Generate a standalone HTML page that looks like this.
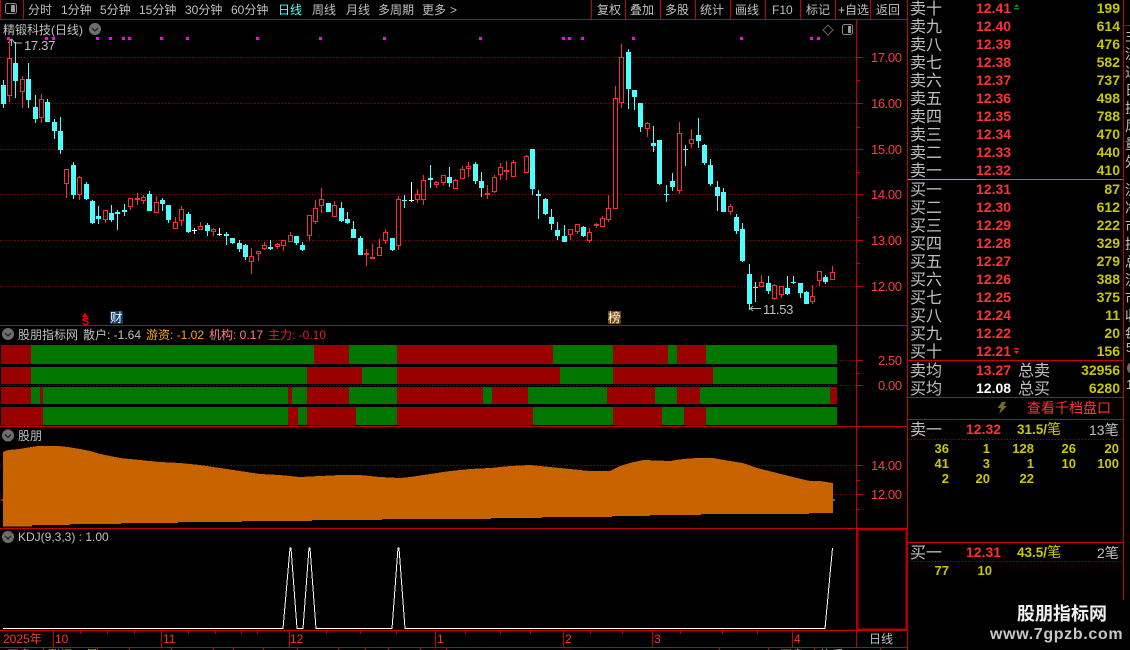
<!DOCTYPE html>
<html><head><meta charset="utf-8"><title>精锻科技</title>
<style>
html,body{margin:0;padding:0;background:#000;width:1130px;height:650px;overflow:hidden}
svg{display:block}
text{font-family:"Liberation Sans","Noto Sans CJK SC",sans-serif;font-size:12px;fill:#c0c0c0}
.l{shape-rendering:crispEdges}
.o text{font-size:16px}
.p text{font-size:14px;font-weight:bold;fill:#ff3232}
.v text{font-size:14px;font-weight:bold;fill:#c8c800;text-anchor:end}
.a text{font-size:13px;fill:#ff3c3c;letter-spacing:-.4px}
.n text{font-size:13px;font-weight:bold;fill:#c8c800;text-anchor:end}
.d text{fill:#ff3232}
</style></head><body>
<svg width="1130" height="650" viewBox="0 0 1130 650" xmlns="http://www.w3.org/2000/svg">
<!-- toolbar -->
<g>
<text x="28" y="14">分时</text><text x="61" y="14">1分钟</text><text x="100" y="14">5分钟</text><text x="139" y="14">15分钟</text><text x="185" y="14">30分钟</text><text x="231" y="14">60分钟</text>
<text x="278" y="14" style="fill:#54ffff">日线</text><text x="312" y="14">周线</text><text x="346" y="14">月线</text><text x="378" y="14">多周期</text><text x="422" y="14">更多</text><text x="450" y="14">&gt;</text>
<text x="597" y="14">复权</text><text x="630" y="14">叠加</text><text x="665" y="14">多股</text><text x="700" y="14">统计</text><text x="735" y="14">画线</text><text x="772" y="14">F10</text><text x="806" y="14">标记</text><text x="838" y="14">+自选</text><text x="876" y="14">返回</text>
</g>
<rect x="5.5" y="3.5" width="11" height="10" rx="2" fill="none" stroke="#8a8a8a"/><rect x="11" y="5" width="4" height="7" fill="#9a9a9a"/>
<!-- grid -->
<g class="l" stroke="#a00000" stroke-dasharray="1 2" fill="none">
<path d="M0 57.5H856M0 103.5H856M0 149.5H856M0 194.5H856M0 240.5H856M0 286.5H856"/>
<path d="M837 360.5H856M0 385.5H856M0 465.5H856M0 494.5H856"/>
</g>
<!-- legend -->
<text x="3" y="34">精锻科技(日线)</text>
<circle cx="95" cy="29" r="6" fill="#6e6e6e"/><path d="M92 28l3 3 3-3" stroke="#222" stroke-width="1.3" fill="none"/>
<path class="l" fill="#ff00ff" d="M7 37h3v3h-3zM45 37h3v3h-3zM52 37h3v3h-3zM96 37h3v3h-3zM109 37h3v3h-3zM122 37h3v3h-3zM128 37h3v3h-3zM160 37h3v3h-3zM186 37h3v3h-3zM256 37h3v3h-3zM319 37h3v3h-3zM383 37h3v3h-3zM479 37h3v3h-3zM562 37h3v3h-3zM568 37h3v3h-3zM581 37h3v3h-3zM632 37h3v3h-3zM740 37h3v3h-3zM810 37h3v3h-3zM817 37h3v3h-3z"/>
<path d="M828 25l5 5-5 5-5-5z" fill="none" stroke="#666"/>
<rect x="842.5" y="24.5" width="10" height="10" rx="2" fill="none" stroke="#888"/><rect x="848" y="26" width="3" height="7" fill="#999"/>
<text x="24" y="50" style="font-size:13px;letter-spacing:-.3px">17.37</text>
<path d="M11.5 39V46M8 43l3.5-4 3.500 4M14 43H22" stroke="#b0b0b0" fill="none" class="l"/>
<text x="763" y="314" style="font-size:13px;letter-spacing:-.3px">11.53</text>
<path d="M750 308.500H761M753 306l-3 2.500 3 2.500M749.500 304V310" stroke="#b0b0b0" fill="none"/>
<!-- candles: wicks -->
<path class="l" fill="none" stroke="#4dffff" d="M3.5 80V108M15.500 42V98M28.500 63V108M35.500 95V123M47.500 99V122M54.500 119V139M60.500 117V154M73.500 162V199M86.500 182V200M92.500 200V224M98.500 206V224M111.500 205V222M117.500 210V230M124.500 204V216M149.500 191V211M162.500 198V211M168.500 205V223M188.500 212V233M207.500 223V236M226.500 232V245M232.500 238V244M239.500 240V252M245.500 244V260M270.500 240V250M296.500 236V245M302.500 242V251M328.500 203V212M341.500 202V222M347.500 212V224M353.500 221V238M360.500 236V255M392.500 238V251M404.500 195V208M430.500 165V188M449.500 167V187M475.500 162V184M481.500 172V197M532.500 149V195M538.500 190V219M545.500 198V215M551.500 209V230M557.500 222V240M564.500 225V242M583.500 226V237M628.500 49V109M634.500 90V110M640.500 103V132M653.500 126V152M659.500 140V185M666.500 185V202M672.500 173V191M685.500 145V166M698.500 118V148M704.500 144V165M710.500 159V186M717.500 181V211M723.500 188V212M736.500 214V234M742.500 223V262M749.500 264V310M755.500 282V302M768.500 276V294M787.500 276V295M793.500 276V284M800.500 283V298M806.500 291V304M825.500 275V284"/>
<path class="l" fill="none" stroke="#ff2e2e" d="M9.500 38V102M22.500 76V108M41.500 94V123M66.500 169V198M79.500 176V200M105.500 210V223M130.500 198V210M137.500 193V205M143.500 195V204M156.500 196V213M175.500 217V229M181.500 206V226M200.500 222V230M213.500 228V236M251.500 248V274M258.500 251V261M264.500 242V250M277.500 243V249M283.500 240V251M290.500 232V242M309.500 215V241M315.500 200V224M321.500 188V213M334.500 201V217M366.500 249V266M372.500 244V259M379.500 239V256M385.500 229V244M398.500 196V250M417.500 189V203M423.500 175V205M436.500 181V188M443.500 175V185M455.500 179V189M462.500 166V179M468.500 162V177M487.500 185V199M494.500 175V193M500.500 163V180M506.500 161V180M513.500 160V177M526.500 155V173M570.500 229V240M577.500 224V234M589.500 228V243M596.500 223V228M602.500 216V227M608.500 195V222M615.500 86V209M621.500 44V108M647.500 122V137M679.500 122V194M691.500 129V148M730.500 204V215M761.500 275V287M774.500 284V300M781.500 286V298M812.500 285V304M819.500 271V286M832.500 266V280"/>
<path class="l" fill="none" stroke="#fff" d="M194.500 228V234M192 230.500H197M219.500 228V236M217 234.500H222M411.500 182V202M409 200.500H414"/>
<!-- candles: cyan bodies -->
<path class="l" fill="none" stroke="#4dffff" stroke-width="5" d="M3.500 85V104M15.500 63V81M28.500 79V100M35.500 107V119M47.500 102V122M54.500 122V131M60.500 131V150M73.500 165V195M86.500 184V199M92.500 201V223M98.500 216V219M111.500 213V220M117.500 212V214M124.500 210V212M149.500 194V211M162.500 200V204M168.500 205V220M188.500 214V232M207.500 225V231M226.500 234V236M232.500 238V243M239.500 243V249M245.500 245V257M270.500 247V249M296.500 236V243M302.500 245V250M328.500 203V212M341.500 208V221M347.500 219V223M353.500 229V238M360.500 238V255M392.500 238V250M404.500 200V201M430.500 178V180M449.500 177V183M475.500 164V181M481.500 181V188M532.500 149V189M538.500 194V196M545.500 199V214M551.500 217V224M557.500 230V236M564.500 236V242M583.500 227V236M628.500 52V89M634.500 90V97M640.500 103V127M653.500 143V146M659.500 140V184M666.500 194V195M672.500 181V187M685.500 149V150M698.500 135V141M704.500 145V163M710.500 165V184M717.500 187V196M723.500 192V212M736.500 217V231M742.500 229V261M749.500 274V304M755.500 287V288M768.500 283V291M787.500 288V294M793.500 282V283M800.500 283V293M806.500 292V304M825.500 277V282"/>
<!-- candles: red bodies -->
<path class="l" fill="#000" stroke="#ff2e2e" d="M7.500 58.500h4V95.500h-4zM20.500 79.500h4V91.500h-4zM39.500 99.500h4V117.500h-4zM64.500 169.500h4V183.500h-4zM77.500 177.500h4V194.500h-4zM103.500 210.500h4V219.500h-4zM128.500 198.500h4V206.500h-4zM135.500 198.500h4V199.500h-4zM141.500 197.500h4V200.500h-4zM154.500 202.500h4V212.500h-4zM173.500 222.500h4V228.500h-4zM179.500 209.500h4V220.500h-4zM198.500 226.500h4V229.500h-4zM211.500 229.500h4V231.500h-4zM249.500 256.500h4V261.500h-4zM256.500 251.500h4V253.500h-4zM262.500 245.500h4V248.500h-4zM275.500 244.500h4V246.500h-4zM281.500 240.500h4V245.500h-4zM288.500 235.500h4V241.500h-4zM307.500 215.500h4V235.500h-4zM313.500 208.500h4V221.500h-4zM319.500 199.500h4V205.500h-4zM332.500 205.500h4V216.500h-4zM364.500 253.500h4V254.500h-4zM370.500 257.500h4V258.500h-4zM377.500 247.500h4V255.500h-4zM383.500 232.500h4V240.500h-4zM396.500 199.500h4V245.500h-4zM415.500 194.500h4V199.500h-4zM421.500 180.500h4V199.500h-4zM434.500 182.500h4V184.500h-4zM441.500 175.500h4V182.500h-4zM453.500 180.500h4V188.500h-4zM460.500 169.500h4V178.500h-4zM466.500 166.500h4V168.500h-4zM485.500 193.500h4V194.500h-4zM492.500 177.500h4V191.500h-4zM498.500 167.500h4V174.500h-4zM504.500 170.500h4V171.500h-4zM511.500 162.500h4V176.500h-4zM524.500 156.500h4V172.500h-4zM568.500 229.500h4V234.500h-4zM575.500 224.500h4V231.500h-4zM587.500 232.500h4V240.500h-4zM594.500 224.500h4V225.500h-4zM600.500 218.500h4V226.500h-4zM606.500 208.500h4V219.500h-4zM613.500 98.500h4V208.500h-4zM619.500 57.500h4V102.500h-4zM645.500 123.500h4V128.500h-4zM677.500 133.500h4V190.500h-4zM689.500 139.500h4V143.500h-4zM728.500 206.500h4V211.500h-4zM759.500 282.500h4V286.500h-4zM772.500 285.500h4V298.500h-4zM779.500 286.500h4V294.500h-4zM810.500 296.500h4V301.500h-4zM817.500 271.500h4V280.500h-4zM830.500 272.500h4V279.500h-4z"/>
<!-- markers -->
<path d="M85 313l3 4h-6z" fill="#f00"/><text x="82" y="325" style="font-size:11px;font-weight:bold;fill:#f00">S</text>
<rect x="110" y="311" width="13" height="13" fill="#0b3a6e"/><text x="110" y="322" style="font-size:12.500px;fill:#fff">财</text>
<rect x="608" y="311" width="13" height="13" fill="#7a4000"/><text x="608" y="322" style="font-size:12.500px;fill:#fff">榜</text>
<!-- indicator bars -->
<g class="l">
<rect x="1" y="345" width="836" height="19" fill="#007800"/>
<path fill="#990000" d="M1 345H31V364H1zM314 345H349V364H314zM397 345H553V364H397zM613 345H668V364H613zM677 345H706V364H677z"/>
<rect x="1" y="367" width="836" height="17" fill="#007800"/>
<path fill="#990000" d="M1 367H31V384H1zM307 367H362V384H307zM397 367H560V384H397zM613 367H713V384H613z"/>
<rect x="1" y="387" width="836" height="17" fill="#007800"/>
<path fill="#990000" d="M1 387H31V404H1zM40 387H43V404H40zM288 387H292V404H288zM307 387H349V404H307zM397 387H483V404H397zM492 387H528V404H492zM607 387H655V404H607zM677 387H700V404H677zM830 387H837V404H830z"/>
<rect x="1" y="407" width="836" height="18" fill="#007800"/>
<path fill="#990000" d="M1 407H43V425H1zM288 407H298V425H288zM307 407H356V425H307zM397 407H533V425H397zM613 407H662V425H613zM684 407H706V425H684z"/>
</g>
<circle cx="8" cy="334" r="6" fill="#6e6e6e"/><path d="M5 333l3 3 3-3" stroke="#222" stroke-width="1.300" fill="none"/>
<text x="18" y="339">股朋指标网</text><text x="83" y="339">散户: -1.64</text>
<text x="146" y="339" style="fill:#ffa020">游资: -1.02</text><text x="209" y="339" style="fill:#ff8080">机构: 0.17</text><text x="268" y="339" style="fill:#e02020">主力: -0.10</text>
<!-- area -->
<path class="l" fill="#c86400" d="M3 452L8 450 19 449 25 448 38 446 58 446 68 447 80 449 90 451 100 454 110 456 120 458 130 459 140 460 160 462 180 463 200 465 220 468 240 471 260 474 280 475 300 477 320 476 340 475 360 475 380 477 400 478 410 477 430 474 450 471 470 469 490 468 510 466 530 465 550 467 570 469 590 471 610 471 620 466 630 463 643 460 670 461 683 459 697 458 713 458 730 461 743 463 757 468 777 473 797 478 810 481 820 481 833 483V513H809V514H701V515H650V516H612V517H542V518H491V519H382V520H312V521H242V522H178V523H121V524H70V525H32V526.500H3z"/>
<rect x="1" y="499" width="2" height="2" fill="#f00"/><rect x="833" y="499" width="2" height="2" fill="#0a0"/>
<circle cx="8" cy="435.500" r="6" fill="#6e6e6e"/><path d="M5 434.500l3 3 3-3" stroke="#222" stroke-width="1.300" fill="none"/>
<text x="18" y="440">股朋</text>
<!-- KDJ -->
<circle cx="8" cy="537" r="6" fill="#6e6e6e"/><path d="M5 536l3 3 3-3" stroke="#222" stroke-width="1.300" fill="none"/>
<text x="18" y="541">KDJ(9,3,3) : 1.00</text>
<path class="l" fill="none" stroke="#fff" d="M3 628.500H283L290 548 291 548 297 628.500H303L309 548 310 548 316 628.500H392L398 548 399 548 405 628.500H825L832.500 548"/>
<!-- frame lines -->
<g class="l" stroke="#c80000" fill="none">
<path d="M0 19.500H907M23.500 0V19M591.500 0V19M625.500 0V19M660.500 0V19M695.500 0V19M730.500 0V19M765.500 0V19M800.500 0V19M835.500 0V19M870.500 0V19M0.500 0V19"/>
<path d="M856.500 19V647M907.500 0V650M0 325.500H907M0 426.500H907M0 528.500H907M0 630.500H907M0 647.500H907"/>
<path d="M857 57.500H863M857 103.500H863M857 149.500H863M857 194.500H863M857 240.500H863M857 286.500H863M857 80.500H860M857 127.500H860M857 172.500H860M857 217.500H860M857 263.500H860"/>
<path d="M857 360.500H863M857 385.500H863M857 373.500H860M857 465.500H863M857 494.500H863M857 480.500H860M857 509.500H860"/>
<path d="M53.500 631V647M161.500 631V647M289.500 631V647M435.500 631V647M563.500 631V647M652.500 631V647M792.500 631V647M80.500 631V634M107.500 631V634M134.500 631V634M188.500 631V634M215.500 631V634M241.500 631V634M257.500 631V634M326.500 631V634M360.500 631V634M396.500 631V634M465.500 631V634M500.500 631V634M530.500 631V634M590.500 631V634M622.500 631V634M680.500 631V634M722.500 631V634M757.500 631V634"/>
<path d="M43.500 648V650M97.500 648V650M129.500 648V650M171.500 648V650M213.500 648V650M233.500 648V650M263.500 648V650M297.500 648V650M338.500 648V650M365.500 648V650M388.500 648V650M420.500 648V650M446.500 648V650M719.500 648V650M768.500 648V650M814.500 648V650M880.500 648V650"/>
<path d="M908 360.500H1123M908 397.500H1123M908 419.500H1123M908 542.500H1123M1123.500 0V600M1123 25.500H1130"/>
</g>
<rect x="857.500" y="529.500" width="49" height="100" fill="none" stroke="#b00000" stroke-width="2" class="l"/>
<g class="l" stroke="#a00000" stroke-dasharray="1 2" fill="none"><path d="M908 439.500H1122M908 561.500H1122"/></g>
<path class="l" stroke="#d6a040" d="M908 179.500H976"/><path class="l" stroke="#4a80c0" d="M976 179.500H1123"/>
<!-- bottom strip fragments -->
<text x="7" y="659">开盘</text><text x="48" y="659" style="fill:#c8c800">涨幅</text><text x="86" y="659" style="fill:#c8c800">量</text><text x="780" y="659">开盘</text><text x="820" y="659">换手</text>
<!-- axis labels -->
<g class="a">
<text x="871" y="62">17.00</text><text x="871" y="108">16.00</text><text x="871" y="154">15.00</text><text x="871" y="199">14.00</text><text x="871" y="245">13.00</text><text x="871" y="291">12.00</text>
<text x="878" y="365">2.50</text><text x="878" y="390">0.00</text><text x="871" y="470">14.00</text><text x="871" y="499">12.00</text>
</g>
<g class="d">
<text x="3" y="643">2025年</text><text x="55" y="643">10</text><text x="163" y="643">11</text><text x="290" y="643">12</text><text x="437" y="643">1</text><text x="565" y="643">2</text><text x="654" y="643">3</text><text x="794" y="643">4</text>
</g>
<text x="869" y="643">日线</text>
<!-- order book labels -->
<g class="o">
<text x="910" y="14">卖十</text><text x="910" y="32">卖九</text><text x="910" y="50">卖八</text><text x="910" y="68">卖七</text><text x="910" y="86">卖六</text><text x="910" y="104">卖五</text><text x="910" y="122">卖四</text><text x="910" y="140">卖三</text><text x="910" y="158">卖二</text><text x="910" y="176">卖一</text>
<text x="910" y="195">买一</text><text x="910" y="213">买二</text><text x="910" y="231">买三</text><text x="910" y="249">买四</text><text x="910" y="267">买五</text><text x="910" y="285">买六</text><text x="910" y="303">买七</text><text x="910" y="321">买八</text><text x="910" y="339">买九</text><text x="910" y="357">买十</text>
<text x="910" y="376">卖均</text><text x="1018" y="376">总卖</text><text x="910" y="394">买均</text><text x="1018" y="394">总买</text>
<text x="910" y="435">卖一</text><text x="910" y="558">买一</text>
</g>
<g class="p">
<text x="976" y="13">12.41</text><text x="976" y="31">12.40</text><text x="976" y="49">12.39</text><text x="976" y="67">12.38</text><text x="976" y="85">12.37</text><text x="976" y="103">12.36</text><text x="976" y="121">12.35</text><text x="976" y="139">12.34</text><text x="976" y="157">12.33</text><text x="976" y="175">12.32</text>
<text x="976" y="194">12.31</text><text x="976" y="212">12.30</text><text x="976" y="230">12.29</text><text x="976" y="248">12.28</text><text x="976" y="266">12.27</text><text x="976" y="284">12.26</text><text x="976" y="302">12.25</text><text x="976" y="320">12.24</text><text x="976" y="338">12.22</text><text x="976" y="356">12.21</text>
<text x="976" y="375">13.27</text><text x="976" y="393" style="fill:#fff">12.08</text>
<text x="966" y="434">12.32</text><text x="966" y="557">12.31</text>
</g>
<g class="v">
<text x="1120" y="13">199</text><text x="1120" y="31">614</text><text x="1120" y="49">476</text><text x="1120" y="67">582</text><text x="1120" y="85">737</text><text x="1120" y="103">498</text><text x="1120" y="121">788</text><text x="1120" y="139">470</text><text x="1120" y="157">440</text><text x="1120" y="175">410</text>
<text x="1120" y="194">87</text><text x="1120" y="212">612</text><text x="1120" y="230">222</text><text x="1120" y="248">329</text><text x="1120" y="266">279</text><text x="1120" y="284">388</text><text x="1120" y="302">375</text><text x="1120" y="320">11</text><text x="1120" y="338">20</text><text x="1120" y="356">156</text>
<text x="1120" y="375">32956</text><text x="1120" y="393">6280</text>
</g>
<path d="M1016.500 4l2.500 3h-5zM1014 8h5v1.500h-5z" fill="#0a8a0a"/>
<path d="M1016.500 354l2.500-3h-5zM1014 348h5v1.500h-5z" fill="#f02020"/>
<path d="M1002 402L1006 402 1003.500 406 1007 406 999 414 1001 408 997.500 408z" fill="#7a6a20"/>
<text x="1027" y="413" style="font-size:14px;fill:#ff3232">查看千档盘口</text>
<text x="1017" y="434" style="font-size:13.500px;font-weight:bold;fill:#c8c800">31.5/<tspan style="font-weight:normal;font-size:14px">笔</tspan></text>
<text x="1089" y="435" style="font-size:14px">13笔</text>
<text x="1017" y="557" style="font-size:13.500px;font-weight:bold;fill:#c8c800">43.5/<tspan style="font-weight:normal;font-size:14px">笔</tspan></text>
<text x="1097" y="558" style="font-size:14px">2笔</text>
<g class="n">
<text x="949" y="453">36</text><text x="990" y="453">1</text><text x="1034" y="453">128</text><text x="1076" y="453">26</text><text x="1119" y="453">20</text>
<text x="949" y="468">41</text><text x="990" y="468">3</text><text x="1034" y="468">1</text><text x="1076" y="468">10</text><text x="1119" y="468">100</text>
<text x="949" y="483">2</text><text x="990" y="483">20</text><text x="1034" y="483">22</text>
<text x="949" y="575">77</text><text x="992" y="575">10</text>
</g>
<!-- clipped right strip -->
<g style="fill:#c0c0c0">
<text x="1125" y="41" style="font-size:14px">主</text><text x="1125" y="59" style="font-size:14px">流</text><text x="1125" y="77" style="font-size:14px">通</text><text x="1125" y="95" style="font-size:14px">日</text><text x="1125" y="113" style="font-size:14px">换</text><text x="1125" y="131" style="font-size:14px">风</text><text x="1125" y="149" style="font-size:14px">量</text><text x="1125" y="167" style="font-size:14px">外</text><text x="1125" y="195" style="font-size:14px">流</text><text x="1125" y="213" style="font-size:14px">净</text><text x="1125" y="231" style="font-size:14px">市</text><text x="1125" y="249" style="font-size:14px">换</text><text x="1125" y="267" style="font-size:14px">总</text><text x="1125" y="285" style="font-size:14px">流</text><text x="1125" y="303" style="font-size:14px">市</text><text x="1125" y="321" style="font-size:14px">收</text><text x="1125" y="339" style="font-size:14px">每</text>
<text x="1126" y="352" style="font-size:13px">5</text><text x="1126" y="389" style="font-size:13px">1</text>
</g>
<circle cx="1133" cy="368" r="6" fill="#6e6e6e"/>
<!-- watermark -->
<text x="1017" y="620" style="font-size:18px;font-weight:bold;fill:#f0f0f0">股朋指标网</text>
<text x="990" y="639" style="font-size:16px;font-weight:bold;fill:#c8c8c8;letter-spacing:.65px">www.7gpzb.com</text>
</svg>
</body></html>
